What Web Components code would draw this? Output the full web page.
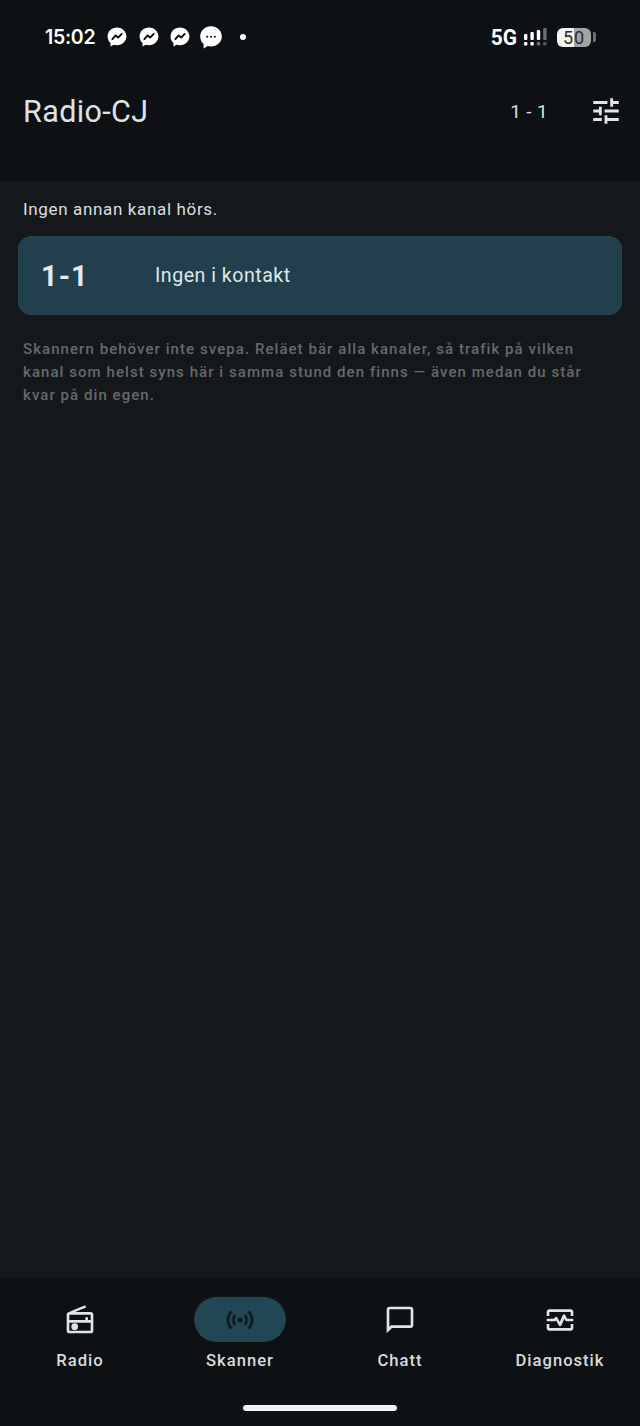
<!DOCTYPE html>
<html lang="sv">
<head>
<meta charset="utf-8">
<title>Radio-CJ</title>
<style>
  html, body { margin: 0; height: 100%; background: #14181b; }
  body { font-family: Roboto, "Liberation Sans", sans-serif; }
  app-shell { height: 1426px; }
</style>
</head>
<body>
<app-shell>
  <status-bar slot="top"></status-bar>
  <app-header slot="top" title="Radio-CJ" range="1 - 1"></app-header>
  <p class="lead" slot="lead">Ingen annan kanal hörs.</p>
  <channel-card code="1-1" slot="card">Ingen i kontakt</channel-card>
  <hint-text slot="hint">Skannern behöver inte svepa. Reläet bär alla kanaler, så trafik på vilken kanal som helst syns här i samma stund den finns — även medan du står kvar på din egen.</hint-text>
  <bottom-nav slot="nav"></bottom-nav>
</app-shell>

<script>
// page frame: top area, scrolling content, nav pinned at bottom
class AppShell extends HTMLElement {
  constructor() {
    super();
    this.attachShadow({ mode: 'open' });
    this.shadowRoot.innerHTML = `
      <style>
        :host { display: flex; flex-direction: column; background: #14181b; color: #e2e5e7; }
        .top { background: #0d1114; height: 181px; flex: none; }
        .content { flex: 1; display: flex; flex-direction: column; padding: 17px 18px 0; }
        .lead { padding: 0 5px; font-size: 17px; line-height: 22px; letter-spacing: .65px; color: #dcdfe1; margin: 0 0 16px; }
        ::slotted(p) { margin: 0; font: inherit; }
        .hint { margin-top: 23px; padding: 0 30px 0 5px; }
      </style>
      <div class="top"><slot name="top"></slot></div>
      <div class="content">
        <div class="lead"><slot name="lead"></slot></div>
        <slot name="card"></slot>
        <div class="hint"><slot name="hint"></slot></div>
      </div>
      <slot name="nav"></slot>`;
  }
}

class StatusBar extends HTMLElement {
  constructor() {
    super();
    this.attachShadow({ mode: 'open' });
    const messenger = `<svg class="m" width="20" height="20" viewBox="0 0 20 20"><path fill="#fff" d="M10 .6C4.7.6.6 4.4.6 9.6c0 2.7 1.1 5 2.9 6.6v3.2l3.1-1.7c1.1.3 2.2.5 3.4.5 5.3 0 9.4-3.8 9.4-8.6S15.3.6 10 .6z"/><path fill="none" stroke="#0d1114" stroke-width="1.9" stroke-linejoin="round" stroke-linecap="round" d="M5.4 12.1 8.6 8.4l2.6 2.1 3.5-3.6"/></svg>`;
    this.shadowRoot.innerHTML = `
      <style>
        :host { display: flex; align-items: center; height: 72px; padding: 2px 44px 0 45px; box-sizing: border-box; color: #fff; font-family: Inter, Roboto, sans-serif; }
        .time { font-size: 19.5px; font-weight: 600; letter-spacing: -.3px; margin-right: 12px; }
        .icons { display: flex; align-items: center; gap: 11.5px; }
        .bubble { margin-left: -2px; }
        .dot { width: 6px; height: 6px; border-radius: 50%; background: #fff; margin-left: 18px; }
        .right { margin-left: auto; display: flex; align-items: center; }
        .net { font-size: 22px; font-weight: 700; font-family: Roboto, sans-serif; margin-right: 6px; transform: scaleX(.95); }
        .batt { display: flex; align-items: center; justify-content: center; width: 34px; height: 19px; border-radius: 6px; margin-left: 9px; background: linear-gradient(90deg, #f4f5f5 50%, #a2a4a4 50%); color: #2a2c2d; font-size: 18px; font-weight: 400; font-family: Roboto, sans-serif; letter-spacing: 1px; }
        .cap { width: 3px; height: 10px; margin-left: 2px; background: #6f7274; border-radius: 0 2px 2px 0; }
      </style>
      <span class="time">15:02</span>
      <div class="icons">
        ${messenger}${messenger}${messenger}
        <svg class="bubble" width="22" height="23" viewBox="0 0 22 23"><path fill="#fff" d="M11 .3C5 .3.2 4.9.2 10.6c0 3 1.3 5.6 3.4 7.5v4.4l4.1-2.4c1 .3 2.2.4 3.3.4 6 0 10.8-4.3 10.8-9.9S17 .3 11 .3z"/><circle cx="7.2" cy="10.8" r="1" fill="#0d1114"/><circle cx="11" cy="10.8" r="1" fill="#0d1114"/><circle cx="14.8" cy="10.8" r="1" fill="#0d1114"/></svg>
      </div>
      <span class="dot"></span>
      <div class="right">
        <span class="net">5G</span>
        <svg width="24" height="18" viewBox="0 0 24 18">
          <g fill="#fff"><rect x="0" y="6" width="3.4" height="6" rx="1"/><rect x="0" y="14" width="3.4" height="3.4" rx="1"/><rect x="6.4" y="4" width="3.4" height="8" rx="1"/><rect x="6.4" y="14" width="3.4" height="3.4" rx="1"/><rect x="12.8" y="2" width="3.4" height="10" rx="1"/></g>
          <rect x="12.8" y="14" width="3.4" height="3.4" rx="1" fill="#6d7072"/><rect x="19.2" y="0" width="3.4" height="12" rx="1" fill="#6d7072"/><rect x="19.2" y="14" width="3.4" height="3.4" rx="1" fill="#55585a"/>
        </svg>
        <span class="batt">50</span><span class="cap"></span>
      </div>`;
  }
}

class AppHeader extends HTMLElement {
  constructor() {
    super();
    this.attachShadow({ mode: 'open' });
  }
  connectedCallback() {
    this.shadowRoot.innerHTML = `
      <style>
        :host { display: flex; align-items: center; height: 78px; padding: 0 17px 0 23px; }
        h1 { margin: 0; font-size: 30.5px; font-weight: 400; color: #dfe2e4; letter-spacing: .38px; flex: 1; }
        .range { font-size: 19px; color: #dcdfe1; letter-spacing: .35px; margin-right: 41px; }
        svg { display: block; }
      </style>
      <h1>${this.getAttribute('title')}</h1>
      <span class="range">${this.getAttribute('range')}</span>
      <svg width="34" height="34" viewBox="0 0 24 24" fill="#e2e5e7"><path d="M3 17v2h6v-2H3zM3 5v2h10V5H3zm10 16v-2h8v-2h-8v-2h-2v6h2zM7 9v2H3v2h4v2h2V9H7zm14 4v-2H11v2h10zm-6-4h2V7h4V5h-4V3h-2v6z"/></svg>`;
  }
}

class ChannelCard extends HTMLElement {
  constructor() {
    super();
    this.attachShadow({ mode: 'open' });
  }
  connectedCallback() {
    this.shadowRoot.innerHTML = `
      <style>
        :host { display: flex; align-items: center; height: 79px; box-sizing: border-box; padding: 0 22px; background: #213f4c; border: 1px solid #2a4551; border-radius: 13px; color: #dfe7ea; }
        .code { width: 114px; font-size: 29px; font-weight: 700; letter-spacing: 1px; color: #e4eaed; }
        .who { font-size: 19.6px; letter-spacing: .5px; }
      </style>
      <span class="code">${this.getAttribute('code')}</span>
      <span class="who"><slot></slot></span>`;
  }
}

class HintText extends HTMLElement {
  constructor() {
    super();
    this.attachShadow({ mode: 'open' });
    this.shadowRoot.innerHTML = `
      <style>
        :host { display: block; font-size: 15px; line-height: 23px; letter-spacing: 1.06px; font-weight: 500; color: #646a6e; }
      </style>
      <slot></slot>`;
  }
}

const NAV_ICONS = {
  radio: `<path d="M3.24 6.15C2.51 6.43 2 7.17 2 8v12c0 1.1.89 2 2 2h16c1.11 0 2-.9 2-2V8c0-1.11-.89-2-2-2H8.3l8.26-3.34L15.88 1 3.24 6.15zM20 8v4h-2v-2h-2v2H4V8h16zM4 20v-6h16v6H4z"/><circle cx="8" cy="17" r="2.5"/>`,
  scan: `<path d="M7.76 16.24C6.67 15.16 6 13.66 6 12s.67-3.16 1.76-4.24l1.42 1.42C8.45 9.9 8 10.9 8 12c0 1.1.45 2.1 1.17 2.83l-1.41 1.41zm8.48 0C17.33 15.16 18 13.66 18 12s-.67-3.16-1.76-4.24l-1.42 1.42C15.55 9.9 16 10.9 16 12c0 1.1-.45 2.1-1.17 2.83l1.41 1.41zM12 10c-1.1 0-2 .9-2 2s.9 2 2 2 2-.9 2-2-.9-2-2-2zm8 2c0 2.21-.9 4.21-2.35 5.65l1.42 1.42C20.88 17.26 22 14.76 22 12s-1.12-5.26-2.93-7.07l-1.42 1.42C19.1 7.79 20 9.79 20 12zM6.35 6.35L4.93 4.93C3.12 6.74 2 9.24 2 12s1.12 5.26 2.93 7.07l1.42-1.42C4.9 16.21 4 14.21 4 12s.9-4.21 2.35-5.65z"/>`,
  chat: `<path d="M20 2H4c-1.1 0-2 .9-2 2v18l4-4h14c1.1 0 2-.9 2-2V4c0-1.1-.9-2-2-2zm0 14H5.17L4 17.17V4h16v12z"/>`,
  diag: `<path d="M20 4H4c-1.1 0-2 .9-2 2v3h2V6h16v3h2V6c0-1.1-.9-2-2-2zm0 16H4c-1.1 0-2-.9-2-2v-3h2v3h16v-3h2v3c0 1.1-.9 2-2 2zM2 11h5.4l1.1-1.1c.4-.4 1-.4 1.4.1l1.9 3.5 2.3-5.3c.3-.7 1.3-.8 1.7-.1l1.6 2.9H22v2h-5.6l-1.1-2-2.3 5.2c-.3.7-1.3.8-1.7.1l-2.2-4L8.2 13H2v-2z"/>`
};

class NavItem extends HTMLElement {
  constructor() {
    super();
    this.attachShadow({ mode: 'open' });
  }
  connectedCallback() {
    const active = this.hasAttribute('active');
    this.shadowRoot.innerHTML = `
      <style>
        :host { display: flex; flex-direction: column; align-items: center; flex: 1; }
        .pill { width: 92px; height: 45px; border-radius: 23px; display: flex; align-items: center; justify-content: center; background: ${active ? '#234654' : 'transparent'}; color: ${active ? '#0f1a1f' : '#e2e5e7'}; }
        .label { margin-top: 8px; font-size: 16.6px; line-height: 22px; font-weight: 500; letter-spacing: 1px; color: #d8dbdd; }
      </style>
      <div class="pill"><svg width="32" height="32" viewBox="0 0 24 24" fill="currentColor">${NAV_ICONS[this.getAttribute('icon')]}</svg></div>
      <span class="label"><slot></slot></span>`;
  }
}

class BottomNav extends HTMLElement {
  constructor() {
    super();
    this.attachShadow({ mode: 'open' });
    this.shadowRoot.innerHTML = `
      <style>
        :host { display: block; height: 148px; box-sizing: border-box; background: #0d1114; padding-top: 19px; }
        .items { display: flex; }
        .bar { width: 154px; height: 6px; margin: 33px auto 0; border-radius: 3px; background: #f2f3f3; }
      </style>
      <div class="items">
        <nav-item icon="radio">Radio</nav-item>
        <nav-item icon="scan" active>Skanner</nav-item>
        <nav-item icon="chat">Chatt</nav-item>
        <nav-item icon="diag">Diagnostik</nav-item>
      </div>
      <div class="bar"></div>`;
  }
}

customElements.define('app-shell', AppShell);
customElements.define('status-bar', StatusBar);
customElements.define('app-header', AppHeader);
customElements.define('channel-card', ChannelCard);
customElements.define('hint-text', HintText);
customElements.define('nav-item', NavItem);
customElements.define('bottom-nav', BottomNav);
</script>
</body>
</html>
